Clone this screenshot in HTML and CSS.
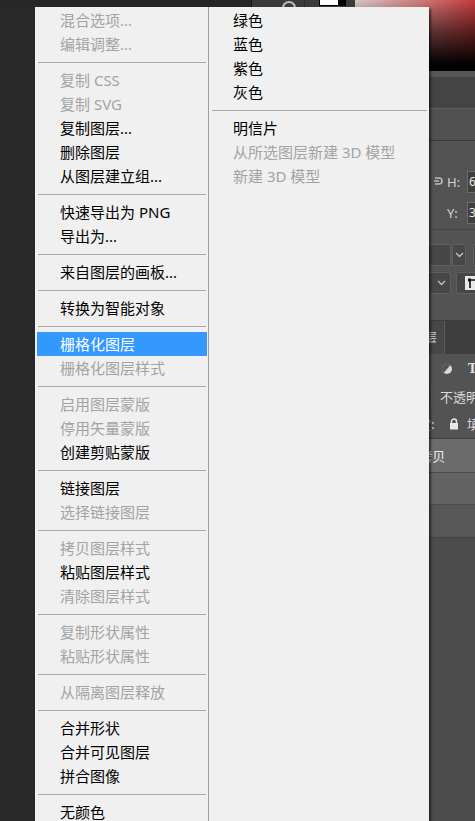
FILE: index.html
```html
<!DOCTYPE html>
<html lang="zh-CN">
<head>
<meta charset="utf-8">
<title>图层菜单</title>
<link rel="stylesheet" href="styles.css">
</head>
<body>
<div class="app">
  <div class="workspace">
    <div class="toolbar">
      <div class="tb-seg tb-dark"></div>
      <div class="tb-seg tb-circle"><span class="ring"></span></div>
      <div class="tb-seg tb-swatch"><span class="swatch"></span></div>
    </div>
  </div>
  <aside class="panel">
    <div class="picker"></div>
    <div class="strip strip-a"></div>
    <div class="strip strip-b"></div>
    <div class="strip strip-c"></div>
    <div class="props">
      <div class="prop-row">
        <svg class="link-icon" width="10" height="12" viewBox="0 0 10 12"><path d="M2 2 H6 A3 3 0 0 1 6 8 H2" fill="none" stroke="#bdbdbd" stroke-width="1.6"/><path d="M1 5 H6" stroke="#bdbdbd" stroke-width="1.4"/></svg>
        <span class="prop-label">H:</span>
        <span class="prop-box">6</span>
      </div>
      <div class="prop-row prop-row-y">
        <span class="prop-label">Y:</span>
        <span class="prop-box">3</span>
      </div>
    </div>
    <div class="selects">
      <div class="sel-row">
        <span class="sel sel-wide"></span>
        <span class="chev-btn"><svg width="9" height="6" viewBox="0 0 9 6"><path d="M1 1 L4.5 4.5 L8 1" fill="none" stroke="#c4c4c4" stroke-width="1.3"/></svg></span>
        <span class="sel sel-tail"></span>
      </div>
      <div class="sel-row sel-row-2">
        <span class="sel sel-wide sel-inner"><svg width="9" height="6" viewBox="0 0 9 6"><path d="M1 1 L4.5 4.5 L8 1" fill="none" stroke="#c4c4c4" stroke-width="1.3"/></svg></span>
        <span class="sel sel-icon"><span class="align-icon"><svg width="10" height="12" viewBox="0 0 10 12"><path d="M1 3 H9 M3 3 V11" stroke="#111" stroke-width="1.6"/><rect x="1" y="1.5" width="3" height="3" fill="#111"/></svg></span></span>
      </div>
    </div>
    <div class="tabbar">
      <span class="tab">图层</span>
    </div>
    <div class="filter-row">
      <svg class="filter-icon" width="12" height="12" viewBox="0 0 12 12"><circle cx="6" cy="6" r="5" fill="#d8d8d8"/><path d="M6 1 A5 5 0 0 0 6 11 Z" fill="#535353" transform="rotate(40 6 6)"/></svg>
      <span class="filter-t">T</span>
    </div>
    <div class="opacity-row">
      <span class="blend"></span>
      <span class="panel-text">不透明度:</span>
    </div>
    <div class="lock-row">
      <span class="panel-text lock-label">锁定:</span>
      <svg class="lock-icon" width="10" height="12" viewBox="0 0 10 12"><path d="M2.5 5 V3.5 A2.5 2.5 0 0 1 7.5 3.5 V5" fill="none" stroke="#e6e6e6" stroke-width="1.5"/><rect x="1" y="5" width="8" height="6.5" fill="#e6e6e6"/></svg>
      <span class="panel-text">填充:</span>
    </div>
    <div class="layer layer-sel"><span class="layer-name">矩形 1 拷贝</span></div>
    <div class="layer layer-b"></div>
    <div class="layer layer-c"></div>
    <div class="layer-rest"></div>
  </aside>
</div>

<div class="menu">
  <div class="col col-main">
    <div class="item disabled">混合选项...</div>
    <div class="item disabled">编辑调整...</div>
    <div class="sep"></div>
    <div class="item disabled">复制 CSS</div>
    <div class="item disabled">复制 SVG</div>
    <div class="item">复制图层...</div>
    <div class="item">删除图层</div>
    <div class="item">从图层建立组...</div>
    <div class="sep"></div>
    <div class="item">快速导出为 PNG</div>
    <div class="item">导出为...</div>
    <div class="sep"></div>
    <div class="item">来自图层的画板...</div>
    <div class="sep"></div>
    <div class="item">转换为智能对象</div>
    <div class="sep"></div>
    <div class="item active">栅格化图层</div>
    <div class="item disabled">栅格化图层样式</div>
    <div class="sep"></div>
    <div class="item disabled">启用图层蒙版</div>
    <div class="item disabled">停用矢量蒙版</div>
    <div class="item">创建剪贴蒙版</div>
    <div class="sep"></div>
    <div class="item">链接图层</div>
    <div class="item disabled">选择链接图层</div>
    <div class="sep"></div>
    <div class="item disabled">拷贝图层样式</div>
    <div class="item">粘贴图层样式</div>
    <div class="item disabled">清除图层样式</div>
    <div class="sep"></div>
    <div class="item disabled">复制形状属性</div>
    <div class="item disabled">粘贴形状属性</div>
    <div class="sep"></div>
    <div class="item disabled">从隔离图层释放</div>
    <div class="sep"></div>
    <div class="item">合并形状</div>
    <div class="item">合并可见图层</div>
    <div class="item">拼合图像</div>
    <div class="sep"></div>
    <div class="item">无颜色</div>
  </div>
  <div class="col col-sub">
    <div class="item">绿色</div>
    <div class="item">蓝色</div>
    <div class="item">紫色</div>
    <div class="item">灰色</div>
    <div class="sep"></div>
    <div class="item">明信片</div>
    <div class="item disabled">从所选图层新建 3D 模型</div>
    <div class="item disabled">新建 3D 模型</div>
  </div>
</div>
</body>
</html>
```

FILE: styles.css
```css
* { box-sizing: border-box; }

html, body {
  margin: 0;
  padding: 0;
}

body {
  width: 475px;
  height: 821px;
  overflow: hidden;
  background: #282828;
  position: relative;
  font-family: "Noto Sans", "Noto Sans CJK SC", sans-serif;
}

.app {
  display: grid;
  grid-template-columns: 1fr 120px;
  height: 821px;
}

.workspace {
  background: #282828;
}

.toolbar {
  display: flex;
  height: 7px;
}

.tb-seg { height: 7px; position: relative; overflow: hidden; flex: none; }
.tb-dark { flex: 1; background: #262626; border-right: 1px solid #1a1a1a; }
.tb-circle { width: 53px; background: #3b3b3b; border-right: 1px solid #2a2a2a; }
.tb-swatch { width: 50px; background: #3b3b3b; }

.ring {
  position: absolute;
  left: 30px;
  top: 1px;
  width: 14px;
  height: 14px;
  border: 2px solid #bdbdbd;
  border-radius: 50%;
}

.swatch {
  position: absolute;
  left: 14px;
  top: -2px;
  width: 27px;
  height: 8px;
  background: #fff;
  border: 1px solid #000;
  border-right: 8px solid #000;
}

.panel {
  display: flex;
  flex-direction: column;
  background: #4c4c4c;
  overflow: hidden;
  font-size: 12px;
  color: #cfcfcf;
}

.picker {
  height: 71px;
  flex: none;
  background:
    linear-gradient(to bottom, rgba(0,0,0,0) 0%, rgba(0,0,0,0.55) 45%, #000 92%),
    linear-gradient(to right, #d9c6c6, #c63b3b);
}

.strip { flex: none; }
.strip-a { height: 6px; background: #575757; }
.strip-b { height: 31px; background: #444; }
.strip-c { height: 33px; background: #505050; border-top: 1px solid #5e5e5e; border-bottom: 1px solid #3b3b3b; }

.props {
  flex: none;
  height: 89px;
  background: #535353;
  padding-top: 29px;
  display: flex;
  flex-direction: column;
  gap: 7px;
  border-bottom: 1px solid #444;
}

.prop-row {
  display: flex;
  align-items: center;
  height: 24px;
  padding-left: 78px;
}

.prop-row-y { padding-left: 92px; }

.link-icon { flex: none; margin-right: 4px; }

.prop-label {
  flex: none;
  width: 20px;
  font-size: 13px;
  color: #d2d2d2;
}

.prop-box {
  flex: none;
  width: 30px;
  height: 22px;
  line-height: 20px;
  padding-left: 1px;
  font-size: 12px;
  color: #e8e8e8;
  background: #3f3f3f;
  border: 1px solid #6c6c6c;
}

.selects {
  flex: none;
  height: 91px;
  background: #535353;
  padding-top: 14px;
  display: flex;
  flex-direction: column;
  gap: 6px;
  border-bottom: 1px solid #3c3c3c;
}

.sel-row {
  display: flex;
  align-items: center;
  height: 22px;
  padding-left: 10px;
}

.sel {
  flex: none;
  height: 22px;
  background: #474747;
  border: 1px solid #5f5f5f;
  border-radius: 2px;
  display: flex;
  align-items: center;
  justify-content: flex-end;
}

.sel-wide { width: 86px; }
.sel-inner { padding-right: 4px; }

.chev-btn {
  flex: none;
  width: 14px;
  height: 22px;
  margin-left: 1px;
  display: flex;
  align-items: center;
  justify-content: center;
  background: #474747;
  border: 1px solid #5f5f5f;
}

.sel-tail { width: 20px; margin-left: 7px; }

.sel-icon {
  width: 24px;
  margin-left: 5px;
  justify-content: flex-start;
  padding-left: 8px;
}

.align-icon {
  display: flex;
  background: #e9e9e9;
  padding: 1px 2px;
}

.tabbar {
  flex: none;
  height: 33px;
  background: #3e3e3e;
  display: flex;
}

.tab {
  flex: none;
  width: 90px;
  background: #474747;
  border-right: 1px solid #5a5a5a;
  padding-left: 58px;
  padding-top: 7px;
  font-size: 12px;
  color: #cfcfcf;
}

.filter-row {
  flex: none;
  height: 30px;
  background: #535353;
  display: flex;
  align-items: center;
  padding-left: 86px;
  gap: 15px;
}

.filter-icon { flex: none; }

.filter-t {
  flex: none;
  font-family: "DejaVu Serif", serif;
  font-weight: bold;
  font-size: 12px;
  color: #e0e0e0;
}

.opacity-row {
  flex: none;
  height: 25px;
  background: #535353;
  display: flex;
  align-items: center;
  gap: 8px;
}

.blend {
  flex: none;
  width: 77px;
  height: 23px;
  background: #4a4a4a;
  border: 1px solid #5f5f5f;
}

.panel-text {
  flex: none;
  font-size: 13px;
  color: #dcdcdc;
  white-space: nowrap;
}

.lock-row {
  flex: none;
  height: 30px;
  background: #535353;
  display: flex;
  align-items: center;
  padding-left: 50px;
  border-bottom: 1px solid #404040;
}

.lock-label { width: 44px; }
.lock-icon { flex: none; margin-right: 8px; }

.layer { flex: none; }

.layer-sel {
  height: 34px;
  background: #6b6b6b;
  border-bottom: 1px solid #4a4a4a;
  display: flex;
  align-items: center;
  padding-left: 24px;
}

.layer-name {
  font-size: 13px;
  color: #eeeeee;
  white-space: nowrap;
}

.layer-b { height: 32px; background: #636363; border-bottom: 1px solid #4b4b4b; }
.layer-c { height: 33px; background: #575757; border-bottom: 1px solid #434343; }
.layer-rest { flex: 1; background: #4c4c4c; }

/* Context menu overlay */
.menu {
  position: absolute;
  left: 35px;
  top: 7px;
  width: 394px;
  height: 830px;
  display: flex;
  background: #f0f0f0;
  box-shadow: 2px 2px 2px rgba(0, 0, 0, 0.55);
  font-family: "Noto Sans", "Noto Sans CJK SC", sans-serif;
  font-size: 15px;
}

.col {
  padding-top: 1px;
  display: flex;
  flex-direction: column;
}

.col-main {
  width: 174px;
  flex: none;
  border-right: 1px solid #a0a0a0;
}

.col-sub {
  flex: 1;
}

.item {
  height: 24px;
  line-height: 24px;
  color: #000;
  white-space: nowrap;
  flex: none;
}

.col-main .item {
  margin: 0 1px 0 2px;
  padding-left: 23px;
}

.col-sub .item {
  padding-left: 24px;
}

.item.disabled { color: #a3a3a3; }

.item.active {
  background: #3399ff;
  color: #fff;
}

.sep {
  height: 1px;
  background: #a8a8a8;
  margin: 6px 2px 5px 3px;
  flex: none;
}
```
